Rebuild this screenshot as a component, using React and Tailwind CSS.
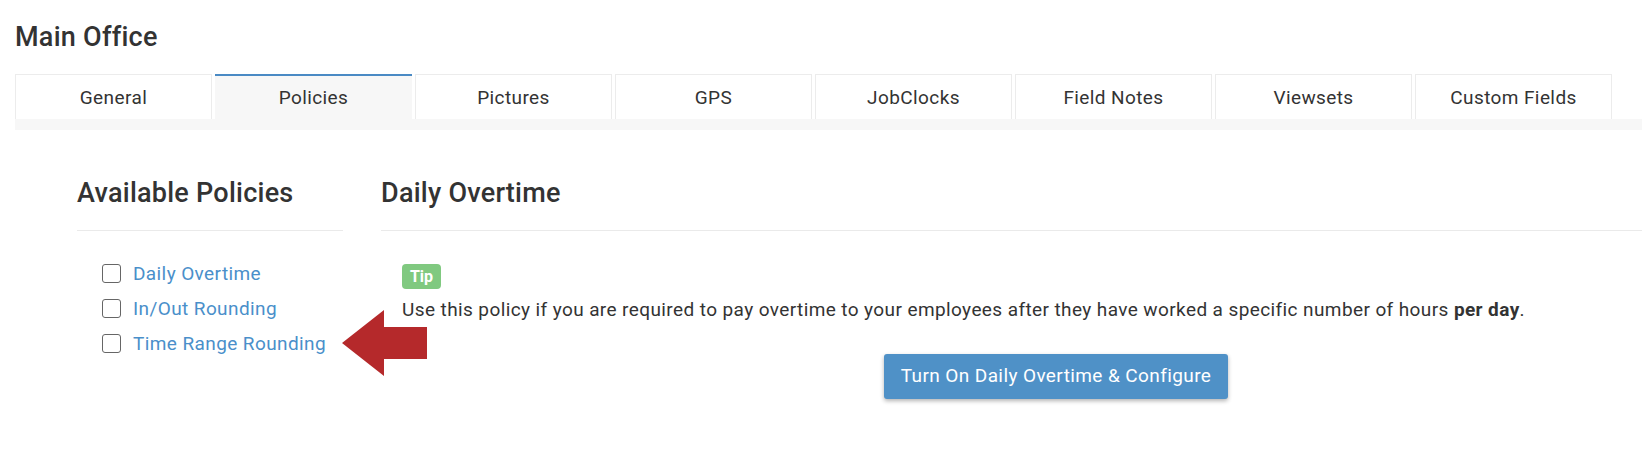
import React from 'react';

const tabs = ['General', 'Policies', 'Pictures', 'GPS', 'JobClocks', 'Field Notes', 'Viewsets', 'Custom Fields'];
const policies = ['Daily Overtime', 'In/Out Rounding', 'Time Range Rounding'];

function Tabs({ active }) {
  return (
    <div className="ml-[15px] mt-[21px]">
      <div className="flex gap-[3px] h-[45px]">
        {tabs.map(t => (
          <div
            key={t}
            className={
              t === active
                ? 'w-[197px] h-[45px] pt-[2px] bg-[#f7f7f7] border-t-2 border-[#4a8ac4] flex items-center justify-center'
                : 'w-[197px] h-[45px] pt-[2px] bg-white border border-b-0 border-[#ececec] flex items-center justify-center'
            }
          >
            <span className="text-[19px] tracking-[0.4px] text-[#333]">{t}</span>
          </div>
        ))}
      </div>
      <div className="h-[11px] bg-[#f7f7f7]" />
    </div>
  );
}

// red annotation arrow pointing at the last policy
function Arrow() {
  return (
    <svg className="absolute left-[341px] top-[309px]" width="87" height="68" viewBox="0 0 87 68">
      <polygon points="1,34 43,1 43,18 86,18 86,50 43,50 43,67" fill="#b5292b" />
    </svg>
  );
}

export default function App() {
  return (
    <div className="relative min-h-[463px] bg-white text-[#333] font-['Roboto',sans-serif]">
      <div className="pt-[22px] pl-[15px]">
        <h1 className="text-[27px] leading-[31px] tracking-[0.25px] font-medium">Main Office</h1>
      </div>

      <Tabs active="Policies" />

      <div className="flex mt-[48px]">
        <div className="ml-[77px] w-[266px] shrink-0">
          <h2 className="text-[27px] leading-[31px] tracking-[0.25px] font-medium pb-[21px] border-b border-[#eaeaea]">
            Available Policies
          </h2>
          <div className="mt-[25px] pl-[25px]">
            {policies.map(p => (
              <label key={p} className="flex items-center h-[35px] gap-[12px]">
                <span className="w-[19px] h-[19px] rounded-[3px] border-[1.5px] border-[#666] bg-white" />
                <span className="pt-[2px] text-[19px] tracking-[0.4px] text-[#4a8fca]">{p}</span>
              </label>
            ))}
          </div>
        </div>

        <div className="ml-[38px] flex-1">
          <h2 className="text-[27px] leading-[31px] tracking-[0.25px] font-medium pb-[21px] border-b border-[#eaeaea]">
            Daily Overtime
          </h2>
          <div className="pl-[21px]">
            <div className="mt-[33px] w-[39px] h-[25px] rounded-[4px] bg-[#80c980] flex items-center justify-center">
              <span className="text-[16px] font-bold text-white">Tip</span>
            </div>
            <p className="mt-[8px] text-[19px] leading-[26px] tracking-[0.4px] whitespace-nowrap">
              Use this policy if you are required to pay overtime to your employees after they have worked a specific
              number of hours <b>per day</b>.
            </p>
            <button className="mt-[31px] ml-[482px] w-[344px] h-[45px] rounded-[3px] bg-[#4f91c7] text-white text-[19px] tracking-[0.4px] shadow-[0_2px_4px_rgba(0,0,0,0.3)]">
              Turn On Daily Overtime &amp; Configure
            </button>
          </div>
        </div>
      </div>

      <Arrow />
    </div>
  );
}
